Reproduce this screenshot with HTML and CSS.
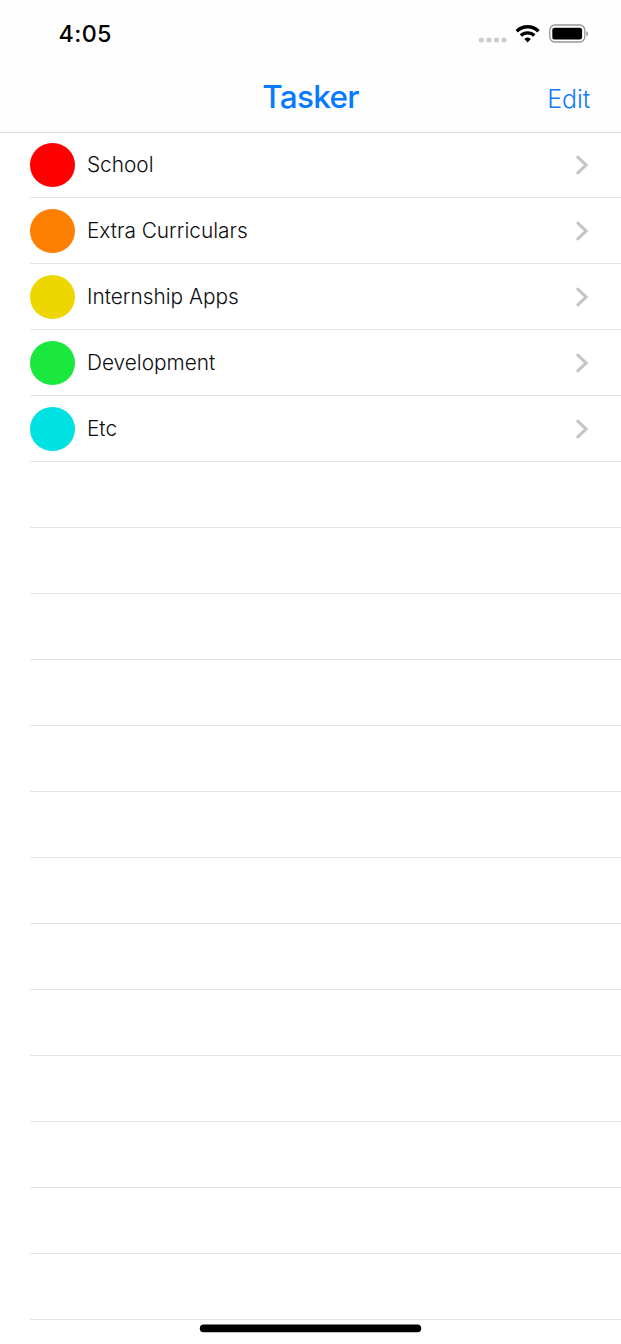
FILE: index.html
```html
<!DOCTYPE html>
<html lang="en">
<head>
<meta charset="utf-8">
<title>Tasker</title>
<link rel="stylesheet" href="styles.css">
</head>
<body>
<div class="screen">
  <header class="header">
    <div class="status">
      <span class="time">4:05</span>
      <svg class="indicators" width="112" height="24" viewBox="0 0 112 24">
        <g fill="#cdcdcf"><circle cx="4.4" cy="18" r="2.6"/><circle cx="12" cy="18" r="2.6"/><circle cx="19.5" cy="18" r="2.6"/><circle cx="27" cy="18" r="2.6"/></g>
        <g fill="none" stroke="#000" stroke-width="3.4">
          <path d="M39.7 9.2a15.7 15.7 0 0 1 21.8 0"/>
          <path d="M43.9 13.6a9.7 9.7 0 0 1 13.4 0"/>
        </g>
        <path d="M50.6 20.4 47.4 17a4.8 4.8 0 0 1 6.4 0z"/>
        <rect x="72.8" y="3" width="35" height="17" rx="5" fill="none" stroke="#979797" stroke-width="1.3"/>
        <rect x="75.3" y="5.7" width="29.8" height="11.8" rx="2.5"/>
        <path d="M109.4 9.2q1.8.7 1.8 2.5t-1.8 2.5z" fill="#979797"/>
      </svg>
    </div>
    <div class="nav">
      <h1 class="title">Tasker</h1>
      <span class="edit">Edit</span>
    </div>
  </header>
  <ul class="list">
    <li class="row"><span class="dot red"></span><span class="label">School</span><svg class="chevron" width="12" height="21" viewBox="0 0 12 21"><path d="M1.8 2.2 10 10 1.8 17.8"/></svg></li>
    <li class="row"><span class="dot orange"></span><span class="label">Extra Curriculars</span><svg class="chevron" width="12" height="21" viewBox="0 0 12 21"><path d="M1.8 2.2 10 10 1.8 17.8"/></svg></li>
    <li class="row"><span class="dot yellow"></span><span class="label">Internship Apps</span><svg class="chevron" width="12" height="21" viewBox="0 0 12 21"><path d="M1.8 2.2 10 10 1.8 17.8"/></svg></li>
    <li class="row"><span class="dot green"></span><span class="label">Development</span><svg class="chevron" width="12" height="21" viewBox="0 0 12 21"><path d="M1.8 2.2 10 10 1.8 17.8"/></svg></li>
    <li class="row"><span class="dot cyan"></span><span class="label">Etc</span><svg class="chevron" width="12" height="21" viewBox="0 0 12 21"><path d="M1.8 2.2 10 10 1.8 17.8"/></svg></li>
    <li class="row"></li><li class="row"></li><li class="row"></li><li class="row"></li>
    <li class="row"></li><li class="row"></li><li class="row"></li><li class="row"></li>
    <li class="row"></li><li class="row"></li><li class="row"></li><li class="row"></li>
    <li class="row"></li>
  </ul>
  <svg class="home" width="223" height="10" viewBox="0 0 223 10"><rect x="0.8" y="0.6" width="221.4" height="7.6" rx="3.8"/></svg>
</div>
</body>
</html>
```
FILE: styles.css
```css
* { box-sizing: border-box; }
body { margin: 0; background: #fff; font-family: Inter, "Liberation Sans", sans-serif; }
.screen { width: 621px; height: 1344px; display: flex; flex-direction: column; overflow: hidden; }
.header { height: 133px; flex: none; background: #fefefe; border-bottom: 1px solid #dcdcde; }
.status { height: 66px; padding: 22px 32px 0 58.5px; display: flex; justify-content: space-between; align-items: flex-start; }
.time { font-size: 23.3px; line-height: 24px; font-weight: 500; letter-spacing: 0.4px; color: #000; }
.nav { height: 66px; display: grid; grid-template-columns: 1fr auto 1fr; padding: 0 31px; }
.title { grid-column: 2; margin: 11px 0 0; font-size: 31.5px; line-height: 40px; font-weight: 550; letter-spacing: -0.7px; color: #087aff; }
.edit { grid-column: 3; justify-self: end; margin-top: 18px; font-size: 25px; line-height: 30px; font-weight: 330; letter-spacing: -0.1px; color: #157aff; }
.list { margin: 0; padding: 0 0 0 30px; list-style: none; flex: none; }
.row { height: 66px; display: flex; align-items: center; border-bottom: 1px solid #e3e3e5; padding: 1px 33px 0 0; }
.row:first-child { height: 65px; padding-top: 0; }
.dot { width: 44.6px; height: 44.6px; border-radius: 50%; margin-right: 12.4px; }
.red { background: #ff0000; }
.orange { background: #ff8000; }
.yellow { background: #eed600; }
.green { background: #1ae83e; }
.cyan { background: #00e1e1; }
.label { flex: 1; font-size: 20.8px; line-height: 26px; font-weight: 320; color: #0c0c0c; letter-spacing: 0; }
.chevron { fill: none; stroke: #c4c4c7; stroke-width: 3; stroke-linecap: round; }
.home { flex: none; align-self: center; margin: 4px 1px 0 0; }
```
